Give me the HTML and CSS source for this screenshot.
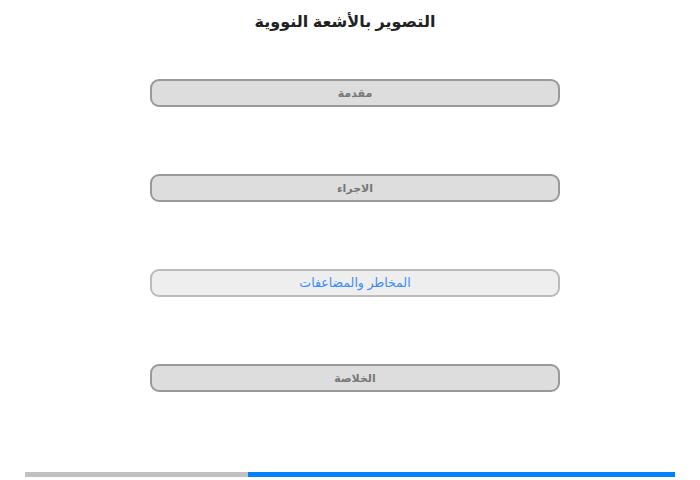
FILE: index.html
```html
<!DOCTYPE html>
<html lang="ar" dir="rtl">
<head>
<meta charset="utf-8">
<link rel="stylesheet" href="styles.css">
</head>
<body>
<div class="page">
  <h1 class="title">التصوير بالأشعة النووية</h1>
  <div class="menu">
    <div class="item">مقدمة</div>
    <div class="item">الاجراء</div>
    <div class="item active">المخاطر والمضاعفات</div>
    <div class="item">الخلاصة</div>
  </div>
  <div class="progress" dir="ltr">
    <div class="done"></div>
    <div class="rest"></div>
  </div>
</div>
</body>
</html>
```
FILE: styles.css
```css
html, body {
  margin: 0;
  padding: 0;
  background: #fff;
  font-family: "Liberation Sans", "DejaVu Sans", sans-serif;
}
.page {
  width: 700px;
  height: 480px;
  display: flex;
  flex-direction: column;
  align-items: center;
}
.title {
  margin: 11px 10px 0 0;
  height: 22px;
  font-size: 16px;
  line-height: 22px;
  font-weight: bold;
  color: #222;
  text-align: center;
}
.menu {
  margin: 46px 0 0 10px;
  width: 410px;
  display: flex;
  flex-direction: column;
  gap: 67px;
}
.item {
  box-sizing: border-box;
  height: 28px;
  border: 2px solid #999;
  border-radius: 9px;
  background: #ddd;
  color: #777;
  font-size: 11px;
  font-weight: bold;
  line-height: 24px;
  text-align: center;
}
.item.active {
  background: #eee;
  border-color: #bbb;
  color: #3a8cff;
  font-size: 12.5px;
  font-weight: normal;
}
.progress {
  margin-top: 80px;
  width: 650px;
  height: 5px;
  display: flex;
}
.done {
  width: 223px;
  background: #c0c0c0;
}
.rest {
  flex: 1;
  background: #007fff;
}
```
